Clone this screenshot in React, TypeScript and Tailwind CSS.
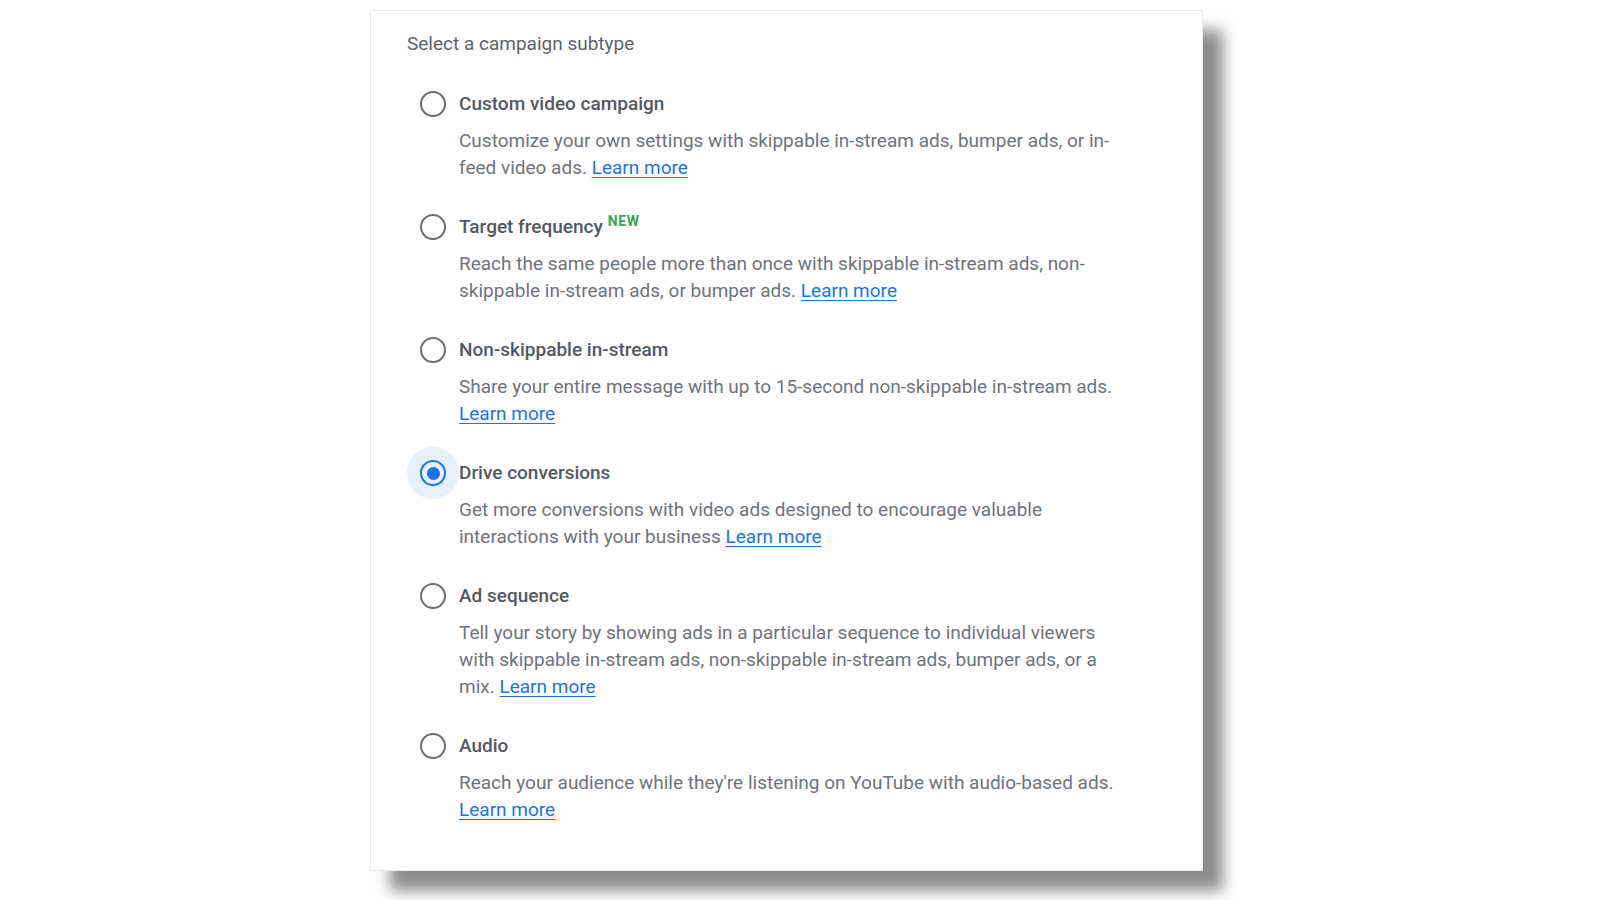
import React from 'react';

type Option = {
  id: string;
  title: string;
  isNew?: boolean;
  lines: string[];
};

// Each description is pre-broken to match the wrap of the original
const options: Option[] = [
  {
    id: 'custom',
    title: 'Custom video campaign',
    lines: ['Customize your own settings with skippable in-stream ads, bumper ads, or in-', 'feed video ads.'],
  },
  {
    id: 'frequency',
    title: 'Target frequency',
    isNew: true,
    lines: ['Reach the same people more than once with skippable in-stream ads, non-', 'skippable in-stream ads, or bumper ads.'],
  },
  {
    id: 'nonskip',
    title: 'Non-skippable in-stream',
    lines: ['Share your entire message with up to 15-second non-skippable in-stream ads.', ''],
  },
  {
    id: 'conversions',
    title: 'Drive conversions',
    lines: ['Get more conversions with video ads designed to encourage valuable', 'interactions with your business'],
  },
  {
    id: 'sequence',
    title: 'Ad sequence',
    lines: [
      'Tell your story by showing ads in a particular sequence to individual viewers',
      'with skippable in-stream ads, non-skippable in-stream ads, bumper ads, or a',
      'mix.',
    ],
  },
  {
    id: 'audio',
    title: 'Audio',
    lines: ["Reach your audience while they're listening on YouTube with audio-based ads.", ''],
  },
];

function Radio({ checked }: { checked: boolean }) {
  return (
    <div className="relative w-[52px] h-[26px] flex items-center justify-center">
      {checked && <div className="absolute left-0 top-[-13px] w-[52px] h-[52px] rounded-full bg-[#e8f0fe]" />}
      <div
        className={`relative w-[26px] h-[26px] rounded-full border-[2.5px] flex items-center justify-center ${
          checked ? 'border-[#1a73e8]' : 'border-[#6b6e72]'
        }`}
      >
        {checked && <div className="w-[13px] h-[13px] rounded-full bg-[#1a73e8]" />}
      </div>
    </div>
  );
}

export default function App() {
  const selected = 'conversions';

  return (
    <div className="min-h-screen bg-white" style={{ fontFamily: 'Roboto, "Liberation Sans", sans-serif' }}>
      <div className="pt-[10px] pl-[370px]">
        <div className="w-[833px] h-[861px] bg-white border border-[#e9e9e9] shadow-[20px_20px_14px_rgba(0,0,0,0.45)] pt-[21px] pl-[36px]">
          <h1 className="text-[19px] leading-[24px] text-[#606368]">Select a campaign subtype</h1>

          <div className="mt-[35px] flex flex-col gap-[33px]">
            {options.map(opt => (
              <div key={opt.id}>
                <div className="flex items-center">
                  <Radio checked={opt.id === selected} />
                  <span className="text-[19px] leading-[26px] font-medium text-[#55585d]">{opt.title}</span>
                  {opt.isNew && (
                    <span className="self-start ml-[5px] text-[14px] leading-[14px] font-bold tracking-[0.6px] text-[#34a853]">
                      NEW
                    </span>
                  )}
                </div>
                <div className="mt-[10px] pl-[52px] text-[19px] leading-[27px] text-[#6f7378]">
                  {opt.lines.map((line, i) => {
                    const last = i === opt.lines.length - 1;
                    return (
                      <div key={i}>
                        {line}
                        {last && (
                          <>
                            {line ? ' ' : ''}
                            <a href="#" className="text-[#1a73e8] underline underline-offset-[3px]">
                              Learn more
                            </a>
                          </>
                        )}
                      </div>
                    );
                  })}
                </div>
              </div>
            ))}
          </div>
        </div>
      </div>
    </div>
  );
}
